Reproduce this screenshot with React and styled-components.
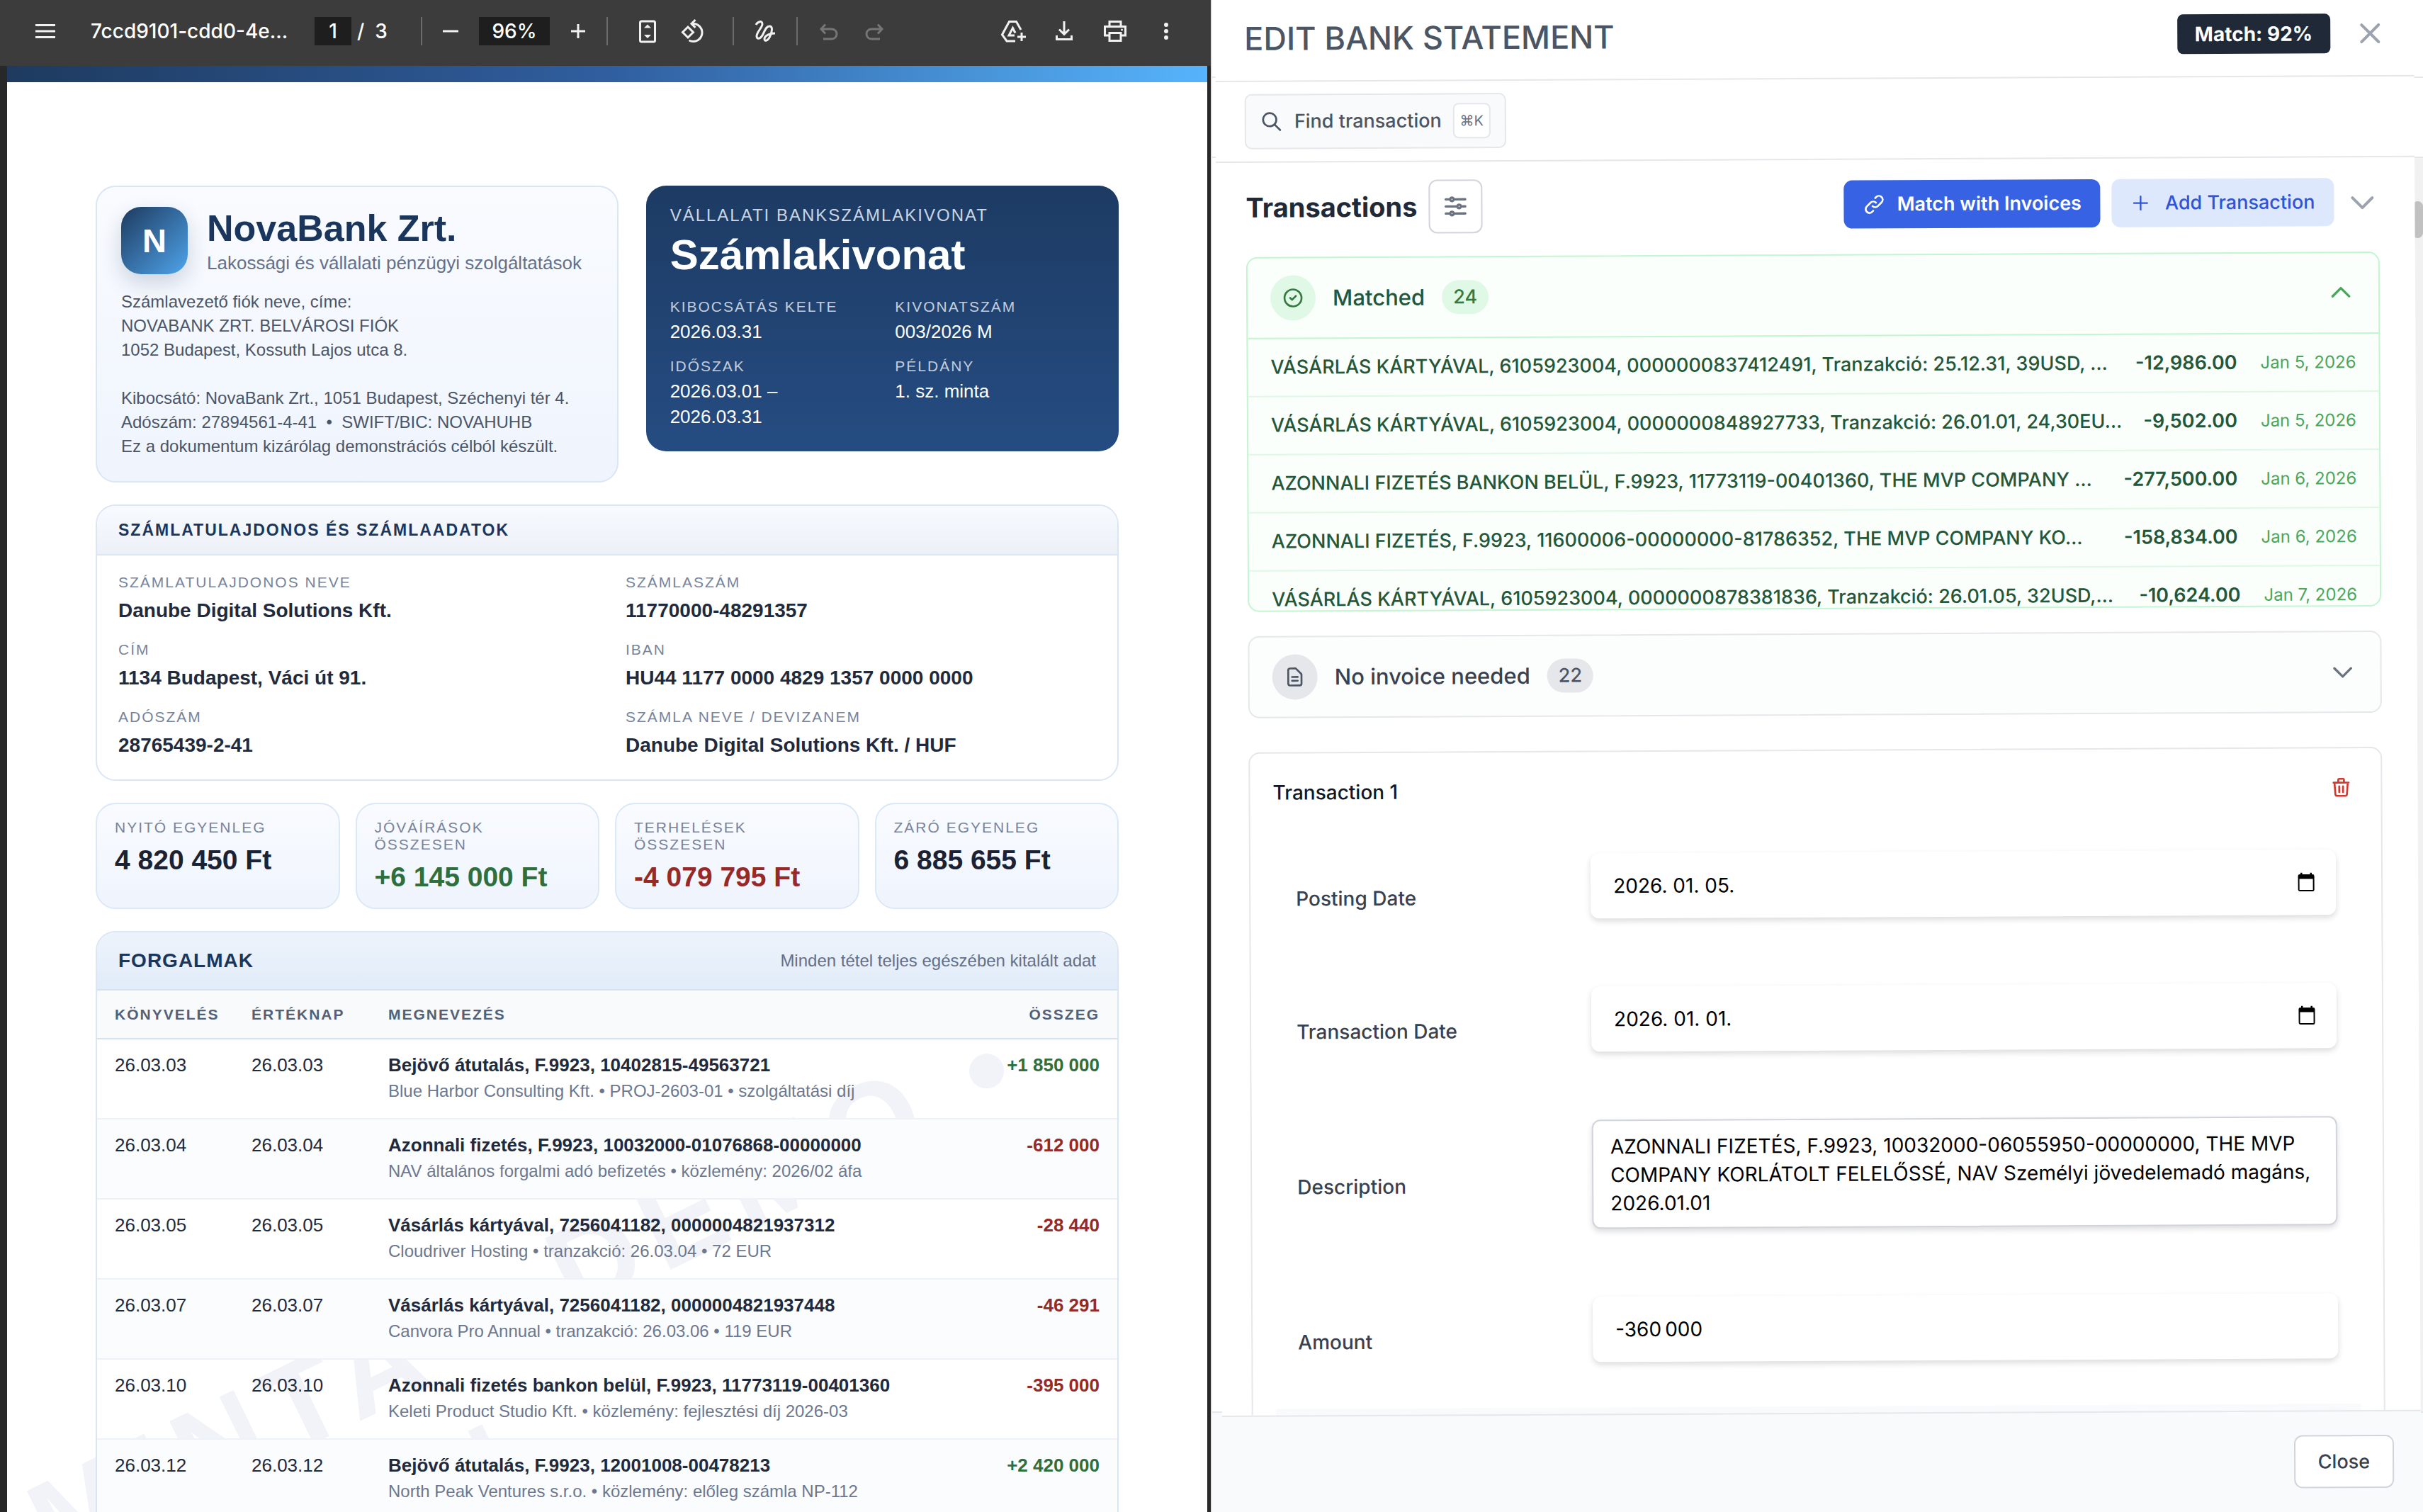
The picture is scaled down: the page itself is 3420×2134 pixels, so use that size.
import { useState } from "react";
import styled, { createGlobalStyle } from "styled-components";

const GlobalStyle = createGlobalStyle`
   *, *::before, *::after {
      box-sizing: border-box;
   }
   body {
      margin: 0;
      background: #ffffff;
   }
   button, input, textarea {
      font: inherit;
      color: inherit;
   }
   h1, h2, h3, p, dl, dd {
      margin: 0;
   }
`;

const Workspace = styled.main`
   display: grid;
   grid-template-columns: minmax(0, 1fr) minmax(0, 1fr);
   height: 100vh;
   overflow: hidden;
`;

/* ---------- document viewer ---------- */

const Viewer = styled.section`
   display: flex;
   flex-direction: column;
   min-width: 0;
   overflow: hidden;
   background: #282828;
   border-right: 1px solid #e5e5e5;
`;

const ViewerBar = styled.header`
   display: flex;
   align-items: center;
   justify-content: space-between;
   flex-shrink: 0;
   height: 93px;
   padding: 0 43px 5px 44px;
   background: #3c3c3c;
   color: #ffffff;
   font: 500 28px/40px Inter, sans-serif;
`;

const BarGroup = styled.div`
   display: flex;
   align-items: center;
   gap: ${({ $gap }) => $gap}px;
`;

const ZoomGroup = styled(BarGroup)`
   margin-right: 12px;
`;

const FileName = styled.span`
   width: 276px;
   margin: 0 16px 0 20px;
   white-space: nowrap;
`;

const BarButton = styled.button`
   display: block;
   width: 40px;
   height: 40px;
   padding: 0;
   border: 0;
   background: none;
   color: ${({ disabled }) => (disabled ? "#757575" : "#f1f1f1")};
   svg {
      display: block;
   }
`;

const BarInput = styled.input`
   width: ${({ $width }) => $width}px;
   height: 40px;
   padding: 0;
   border: 0;
   background: #1e1e1e;
   text-align: center;
`;

const PageCount = styled.span`
   width: 66px;
   margin-left: -16px;
   white-space: pre;
`;

const BarDivider = styled.span`
   width: 2px;
   height: 40px;
   margin-left: ${({ $spaced }) => ($spaced ? 12 : 0)}px;
   background: #6c6c6c;
`;

const Paper = styled.article`
   position: relative;
   flex: 1;
   min-height: 0;
   margin: 0 5px 0 10px;
   overflow: hidden;
   background: #ffffff;
   color: #1f2a3d;
   font: 26px/36px "Liberation Sans", Arial, sans-serif;
`;

const PaperStripe = styled.div`
   height: 23px;
   background: linear-gradient(90deg, #1e3a5f, #305e9f 50%, #56b4fc);
`;

const Watermark = styled.div`
   position: absolute;
   top: 1980px;
   left: 0;
   transform: rotate(-26deg);
   transform-origin: 0 0;
   color: #f1f3f8;
   font: bold 171px/197px "Liberation Sans", Arial, sans-serif;
   letter-spacing: 17px;
   white-space: nowrap;
   span {
      display: block;
      padding-left: 518px;
   }
`;

const PaperContent = styled.div`
   position: relative;
   display: flex;
   flex-direction: column;
   gap: 31px;
   padding: 146px 125px 0;
`;

const CardPair = styled.div`
   display: grid;
   grid-template-columns: 21fr 19fr;
   align-items: start;
   gap: 39px;
`;

const BankCard = styled.section`
   padding: 28px 34px 32px;
   border: 2px solid #dbe6f4;
   border-radius: 28px;
   background: linear-gradient(#f9fbff, #eff4fd);
`;

const BankHead = styled.div`
   display: flex;
   gap: 27px;
   margin-bottom: 22px;
`;

const BankLogo = styled.div`
   display: flex;
   align-items: center;
   justify-content: center;
   width: 94px;
   height: 95px;
   border-radius: 28px;
   background: linear-gradient(135deg, #1e3a5f, #4ea4ea);
   box-shadow: 0 12px 30px rgba(30, 58, 95, 0.2);
   color: #ffffff;
   font-size: 47px;
   font-weight: bold;
`;

const BankName = styled.h1`
   color: #1a365d;
   font-size: 52px;
   line-height: 60px;
`;

const BankTagline = styled.p`
   margin-top: 4px;
   color: #64708a;
   line-height: 30px;
`;

const BankAddress = styled.p`
   color: #4a5568;
   font-size: 24px;
   line-height: 34px;
   white-space: pre-line;
`;

const StatementCard = styled.section`
   padding: 27px 34px 31px;
   border-radius: 28px;
   background: linear-gradient(#1d3b63, #254c82);
   color: #ffffff;
`;

const StatementKind = styled.p`
   color: #ccd5e2;
   font-size: 24px;
   line-height: 30px;
   letter-spacing: 2px;
`;

const StatementTitle = styled.h2`
   margin: 8px 0 28px;
   font-size: 60px;
   line-height: 66px;
`;

const MetaGrid = styled.dl`
   display: grid;
   grid-template-columns: 1fr 1fr;
   gap: 19px 36px;
`;

const Caption = styled.dt`
   color: ${({ $light }) => ($light ? "#c3cddc" : "#77849b")};
   font-size: 21px;
   line-height: 24px;
   letter-spacing: 2px;
`;

const MetaValue = styled.dd`
   width: 200px;
   margin-top: 5px;
`;

const Panel = styled.section`
   overflow: hidden;
   border: 2px solid #dbe6f4;
   border-radius: 28px;
`;

const LedgerPanel = styled(Panel)`
   padding-bottom: 60px;
`;

const AccountTitle = styled.h2`
   padding: 16px 30px;
   border-bottom: 2px solid #dbe6f4;
   background: linear-gradient(#f7faff, #edf1f7);
   color: #1a365d;
   font-size: 23px;
   line-height: 36px;
   letter-spacing: 2px;
`;

const AccountGrid = styled.dl`
   display: grid;
   grid-template-columns: 1fr 1fr;
   gap: 25px 52px;
   padding: 26px 30px 30px;
`;

const AccountValue = styled.dd`
   margin-top: 10px;
   font-size: 28px;
   font-weight: bold;
`;

const Totals = styled.dl`
   display: grid;
   grid-template-columns: repeat(4, 1fr);
   gap: 22px;
`;

const TotalCard = styled.div`
   padding: 21px 25px;
   border: 2px solid #dbe8f7;
   border-radius: 28px;
   background: linear-gradient(#f9fbff, #eff4fd);
`;

const tones = { plus: "#2f6e3d", minus: "#962a28" };

const TotalValue = styled.dd`
   margin-top: 12px;
   color: ${({ $tone }) => tones[$tone] || "#1a2233"};
   font-size: 39px;
   font-weight: bold;
   line-height: 44px;
   white-space: nowrap;
`;

const LedgerHead = styled.div`
   display: flex;
   align-items: center;
   justify-content: space-between;
   height: 82px;
   padding: 0 30px;
   border-bottom: 2px solid #d3e3f3;
   background: linear-gradient(#edf3fb, #e1ecf9);
   color: #64708a;
   font-size: 24px;
`;

const LedgerTitle = styled.h2`
   color: #1a365d;
   font-size: 28px;
   letter-spacing: 1px;
`;

const Ledger = styled.table`
   width: 100%;
   border-collapse: collapse;
   table-layout: fixed;
   th {
      height: 68px;
      padding: 0 25px;
      border-bottom: 2px solid #d7e2f0;
      background: #f9fafc;
      color: #51617a;
      font-size: 21px;
      letter-spacing: 2px;
      text-align: left;
   }
   td {
      height: 113px;
      padding: 18px 25px 21px;
      border-bottom: 2px solid #edf1f8;
      vertical-align: top;
   }
   tbody tr:nth-child(even) {
      background: #fbfcfe;
   }
   th:nth-child(-n + 2) {
      width: 193px;
   }
   th:last-child {
      width: 230px;
      text-align: right;
   }
`;

const LedgerNote = styled.p`
   margin-top: 2px;
   color: #6b7890;
   font-size: 24px;
   line-height: 34px;
   white-space: nowrap;
`;

const LedgerAmount = styled.td`
   color: ${({ $tone }) => tones[$tone]};
   font-weight: bold;
   text-align: right;
   white-space: nowrap;
`;

/* ---------- edit drawer ---------- */

const Drawer = styled.aside`
   position: relative;
   min-width: 0;
   overflow: hidden;
   border-left: 1px solid #e5e5e5;
   background: linear-gradient(
      #ffffff 108px,
      #e5e7eb 108px 110px,
      #ffffff 110px 221px,
      #e5e7eb 221px 223px,
      #ffffff 223px calc(100% - 142px),
      #e5e7eb calc(100% - 142px) calc(100% - 140px),
      #f9fafb calc(100% - 140px)
   );
   color: #374151;
   font: 500 27px/40px Inter, sans-serif;
`;

const ScrollTrack = styled.div`
   position: absolute;
   top: 223px;
   right: 0;
   bottom: 142px;
   width: 15px;
   padding-top: 61px;
   background: #f1f1f1;
   &::before {
      content: "";
      display: block;
      height: 52px;
      border-radius: 8px;
      background: #c1c1c1;
   }
`;

/* the sheet hangs slightly askew on the drawer */
const Sheet = styled.div`
   position: relative;
   display: flex;
   flex-direction: column;
   width: calc(100% - 17px);
   height: calc(100% + 8px);
   margin-left: 4px;
   background: #ffffff;
   transform: rotate(-0.28deg);
   transform-origin: 0 0;
`;

const SheetHeader = styled.header`
   display: flex;
   align-items: center;
   height: 116px;
   padding: 0 38px 5px 41px;
   border-bottom: 2px solid #e5e7eb;
`;

const SheetTitle = styled.h1`
   flex: 1;
   color: #4b5563;
   font-size: 45px;
   font-weight: 500;
   line-height: 56px;
`;

const MatchBadge = styled.span`
   padding: 8px 25px;
   border-radius: 8px;
   background: #1f2937;
   color: #ffffff;
   font-size: 28px;
   font-weight: 700;
`;

const IconButton = styled.button`
   display: flex;
   padding: 0;
   border: 0;
   background: none;
   color: ${({ $color }) => $color};
`;

const CloseIconButton = styled(IconButton)`
   margin-left: 32px;
`;

const SearchBar = styled.div`
   height: 114px;
   padding: 17px 41px;
   border-bottom: 2px solid #e5e7eb;
`;

const SearchButton = styled.button`
   display: flex;
   align-items: center;
   gap: 16px;
   height: 78px;
   padding: 0 20px;
   border: 2px solid #e5e7eb;
   border-radius: 10px;
   background: #f9fafb;
   color: #4b5563;
`;

const Shortcut = styled.kbd`
   width: 53px;
   border: 2px solid #e5e7eb;
   border-radius: 8px;
   background: #ffffff;
   color: #6b7280;
   font: 20px/46px Inter, "DejaVu Sans", sans-serif;
   text-align: center;
`;

const SheetBody = styled.div`
   flex: 1;
   min-height: 0;
   padding: 25px 50px 0 42px;
   overflow: hidden;
`;

const SectionBar = styled.div`
   display: flex;
   align-items: center;
   gap: 16px;
   margin-bottom: 32px;
`;

const SectionTitle = styled.h2`
   color: #1f2937;
   font-size: 38px;
   font-weight: 700;
   line-height: 48px;
`;

const FilterButton = styled.button`
   display: flex;
   align-items: center;
   justify-content: center;
   width: 76px;
   height: 76px;
   margin-right: auto;
   border: 2px solid #d1d5db;
   border-radius: 12px;
   background: #ffffff;
   color: #6b7280;
`;

const ActionButton = styled.button`
   display: flex;
   align-items: center;
   gap: ${({ $primary }) => ($primary ? 16 : 20)}px;
   height: 68px;
   padding: 0 27px;
   border: 0;
   border-radius: 12px;
   background: ${({ $primary }) => ($primary ? "#3662e3" : "#dde8fc")};
   color: ${({ $primary }) => ($primary ? "#ffffff" : "#2f54d8")};
   font-weight: ${({ $primary }) => ($primary ? 600 : 500)};
`;

const palettes = {
   green: {
      border: "#c3f5d1",
      background: "#fafffb",
      chip: "#e0f9e7",
      text: "#24563a",
      chipText: "#35793f",
      icon: "#4aa65a",
   },
   gray: {
      border: "#e5e7eb",
      background: "#fcfdfd",
      chip: "#e5e7eb",
      text: "#374151",
      chipText: "#4b5563",
      icon: "#6b7280",
   },
};

const Group = styled.section`
   margin-bottom: 34px;
   overflow: hidden;
   border: 2px solid ${({ $palette }) => $palette.border};
   border-radius: 16px;
   background: ${({ $palette }) => $palette.background};
`;

const GroupHead = styled.button`
   display: flex;
   align-items: center;
   width: 100%;
   height: 112px;
   padding: 0 33px 0 32px;
   border: 0;
   background: none;
   color: ${({ $palette }) => $palette.text};
   > svg {
      margin-left: auto;
      color: ${({ $palette }) => $palette.icon};
   }
`;

const GroupIcon = styled.span`
   display: flex;
   align-items: center;
   justify-content: center;
   width: 64px;
   height: 64px;
   border-radius: 50%;
   background: ${({ $palette }) => $palette.chip};
   color: ${({ $palette }) => $palette.chipText};
`;

const GroupName = styled.span`
   margin: 0 24px;
   font-size: 31px;
`;

const GroupCount = styled.span`
   padding: 4px 16px;
   border-radius: 24px;
   background: ${({ $palette }) => $palette.chip};
   color: ${({ $palette }) => $palette.chipText};
`;

const MatchList = styled.ul`
   max-height: 385px;
   margin: 0;
   padding: 0;
   overflow: hidden;
   border-top: 2px solid #c3f5d1;
   list-style: none;
`;

const MatchRow = styled.li`
   display: flex;
   align-items: center;
   gap: 33px;
   height: 82px;
   padding: 0 32px;
   border-bottom: 2px solid #def8e5;
   color: #24563a;
   white-space: nowrap;
`;

const MatchName = styled.span`
   flex: 1;
   min-width: 0;
`;

const MatchAmount = styled.span`
   font-weight: 600;
`;

const MatchDate = styled.time`
   color: #4aa65a;
   font-size: 24px;
   font-weight: 400;
`;

const TransactionCard = styled.section`
   margin-top: 48px;
   padding: 0 32px;
   border: 2px solid #e5e7eb;
   border-radius: 16px;
`;

const TransactionHead = styled.div`
   display: flex;
   align-items: center;
   justify-content: space-between;
   padding: 35px 8px 20px 0;
   color: #111827;
`;

const TransactionTitle = styled.h3`
   font-size: 28px;
   font-weight: 500;
`;

const FieldRow = styled.div`
   display: grid;
   grid-template-columns: 416px 1fr;
   align-items: center;
   padding: 48px 32px;
`;

const FieldLabel = styled.label`
   padding-top: 32px;
   font-size: 28px;
`;

const FieldBox = styled.div`
   display: flex;
   align-items: center;
   height: 92px;
   padding: 0 30px 0 32px;
   border-radius: 12px;
   background: #ffffff;
   box-shadow: 0 4px 8px rgba(0, 0, 0, 0.14);
   color: #000000;
`;

const FieldInput = styled.input`
   flex: 1;
   min-width: 0;
   padding: 0;
   border: 0;
   background: none;
   font-size: 28px;
   font-weight: 400;
   outline: none;
`;

const FieldTextarea = styled.textarea`
   display: block;
   width: 100%;
   height: 154px;
   padding: 16px 24px;
   border: 2px solid #d1d5db;
   border-radius: 12px;
   background: #ffffff;
   box-shadow: 0 4px 8px rgba(0, 0, 0, 0.14);
   color: #000000;
   font-size: 28px;
   font-weight: 400;
   overflow: hidden;
   resize: none;
`;

const CardFooter = styled.div`
   height: 80px;
   margin-top: 16px;
   background: #f9fafb;
`;

const SheetFooter = styled.footer`
   display: flex;
   align-items: flex-start;
   justify-content: flex-end;
   height: 144px;
   padding: 33px 38px;
   border-top: 2px solid #e5e7eb;
   background: #f9fafb;
`;

const CloseButton = styled.button`
   height: 75px;
   padding: 0 32px;
   border: 2px solid #d1d5db;
   border-radius: 12px;
   background: #ffffff;
`;

/* ---------- icons ---------- */

const Icon = ({ d, size = 32, weight = 2 }) => (
   <svg
      width={size}
      height={size}
      viewBox="0 0 24 24"
      fill="none"
      stroke="currentColor"
      strokeWidth={weight}
      strokeLinecap="round"
      strokeLinejoin="round"
      aria-hidden="true"
   >
      <path d={d} />
   </svg>
);

const paths = {
   search: "M21 21l-6-6m2-5a7 7 0 11-14 0 7 7 0 0114 0z",
   close: "M6 18L18 6M6 6l12 12",
   plus: "M12 4v16m8-8H4",
   down: "M19 9l-7 7-7-7",
   up: "M5 15l7-7 7 7",
   check: "M9 12l2 2 4-4m6 2a9 9 0 11-18 0 9 9 0 0118 0z",
   document:
      "M9 12h6m-6 4h6m2 5H7a2 2 0 01-2-2V5a2 2 0 012-2h5.586a1 1 0 01.707.293l5.414 5.414a1 1 0 01.293.707V19a2 2 0 01-2 2z",
   link: "M13.828 10.172a4 4 0 00-5.656 0l-4 4a4 4 0 105.656 5.656l1.102-1.101m-.758-4.899a4 4 0 005.656 0l4-4a4 4 0 00-5.656-5.656l-1.1 1.1",
   trash: "M19 7l-.867 12.142A2 2 0 0116.138 21H7.862a2 2 0 01-1.995-1.858L5 7m5 4v6m4-6v6m1-10V4a1 1 0 00-1-1h-4a1 1 0 00-1 1v3M4 7h16",
   sliders:
      "M10.5 6h9.75M10.5 6a1.5 1.5 0 11-3 0m3 0a1.5 1.5 0 10-3 0M3.75 6H7.5m3 12h9.75m-9.75 0a1.5 1.5 0 01-3 0m3 0a1.5 1.5 0 00-3 0m-3.75 0H7.5m9-6h3.75m-3.75 0a1.5 1.5 0 01-3 0m3 0a1.5 1.5 0 00-3 0m-9.75 0h9.75",
};

const barIcons = {
   menu: <path d="M6 11.5h28M6 20h28M6 28.5h28" />,
   minus: <path d="M9 20h22" />,
   plus: <path d="M10 20h20M20 10v20" />,
   fit: (
      <>
         <rect x="9.5" y="6" width="21" height="29" rx="2" />
         <path d="M20 10.5l5 5H15zM20 30l5-5H15z" fill="currentColor" stroke="none" />
      </>
   ),
   rotate: (
      <>
         <path d="M13 14l7.5 7.5-7.5 7.5-7.5-7.5z" />
         <path d="M18 9.5h2.5a12.5 12.5 0 010 25c-2 0-4-.5-6-1.5M23.5 4L18 9.5l5.500 5.5" />
      </>
   ),
   draw: (
      <path d="M7 11c2-4 9-7 9-1 0 5-8 11-8 17 0 5 5 4 8-1 4-7 5-13 10-13s4 7 1 14-8 8-8 4 6-8 15-8" />
   ),
   undo: <path d="M15 10.5L9 17l6 6.5M9 17h15a7 7 0 010 14H12" />,
   redo: <path d="M25 10.5l6 6.5-6 6.5M31 17H16a7 7 0 000 14h12" />,
   drive: (
      <path d="M23 34H11L4.5 25 14.5 6.5h10L31 18M22 26h-8l5.5-10.5 3.5 7M32 22v12M26 28h12" />
   ),
   download: <path d="M20 6v18M13 17.5l7 7 7-7M9.5 26v5.5h21V26" />,
   print: (
      <>
         <path d="M12 13V6.5h16V13M12 26H5.5V13.5h29V26H28" />
         <path d="M12 22.5h16v11H12z" />
         <circle cx="29.5" cy="18" r="1.5" fill="currentColor" stroke="none" />
      </>
   ),
   more: (
      <g fill="currentColor" stroke="none">
         <circle cx="20" cy="11" r="3" />
         <circle cx="20" cy="20" r="3" />
         <circle cx="20" cy="29" r="3" />
      </g>
   ),
};

const BarAction = ({ name, label, disabled }) => (
   <BarButton type="button" aria-label={label} disabled={disabled}>
      <svg
         width="40"
         height="40"
         viewBox="0 0 40 40"
         fill="none"
         stroke="currentColor"
         strokeWidth="3"
         aria-hidden="true"
      >
         {barIcons[name]}
      </svg>
   </BarButton>
);

const CalendarIcon = () => (
   <svg width="24" height="28" viewBox="0 0 24 28" aria-hidden="true">
      <path
         d="M4 0h2.5v2.5h11V0H20v2.5h1A2.5 2.5 0 0123.5 5v19a2.5 2.5 0 01-2.5 2.5H3A2.5 2.5 0 01.5 24V5A2.5 2.5 0 013 2.5h1zM2.5 9v15.5h19V9z"
         fill="#000000"
         fillRule="evenodd"
      />
   </svg>
);

/* ---------- data ---------- */

const accountFields = [
   ["SZÁMLATULAJDONOS NEVE", "Danube Digital Solutions Kft."],
   ["SZÁMLASZÁM", "11770000-48291357"],
   ["CÍM", "1134 Budapest, Váci út 91."],
   ["IBAN", "HU44 1177 0000 4829 1357 0000 0000"],
   ["ADÓSZÁM", "28765439-2-41"],
   ["SZÁMLA NEVE / DEVIZANEM", "Danube Digital Solutions Kft. / HUF"],
];

const statementMeta = [
   ["KIBOCSÁTÁS KELTE", "2026.03.31"],
   ["KIVONATSZÁM", "003/2026 M"],
   ["IDŐSZAK", "2026.03.01 – 2026.03.31"],
   ["PÉLDÁNY", "1. sz. minta"],
];

const totals = [
   { label: "NYITÓ EGYENLEG", value: "4 820 450 Ft" },
   { label: "JÓVÁÍRÁSOK ÖSSZESEN", value: "+6 145 000 Ft", tone: "plus" },
   { label: "TERHELÉSEK ÖSSZESEN", value: "-4 079 795 Ft", tone: "minus" },
   { label: "ZÁRÓ EGYENLEG", value: "6 885 655 Ft" },
];

const ledger = [
   {
      date: "26.03.03",
      title: "Bejövő átutalás, F.9923, 10402815-49563721",
      note: "Blue Harbor Consulting Kft. • PROJ-2603-01 • szolgáltatási díj",
      amount: "+1 850 000",
   },
   {
      date: "26.03.04",
      title: "Azonnali fizetés, F.9923, 10032000-01076868-00000000",
      note: "NAV általános forgalmi adó befizetés • közlemény: 2026/02 áfa",
      amount: "-612 000",
   },
   {
      date: "26.03.05",
      title: "Vásárlás kártyával, 7256041182, 0000004821937312",
      note: "Cloudriver Hosting • tranzakció: 26.03.04 • 72 EUR",
      amount: "-28 440",
   },
   {
      date: "26.03.07",
      title: "Vásárlás kártyával, 7256041182, 0000004821937448",
      note: "Canvora Pro Annual • tranzakció: 26.03.06 • 119 EUR",
      amount: "-46 291",
   },
   {
      date: "26.03.10",
      title: "Azonnali fizetés bankon belül, F.9923, 11773119-00401360",
      note: "Keleti Product Studio Kft. • közlemény: fejlesztési díj 2026-03",
      amount: "-395 000",
   },
   {
      date: "26.03.12",
      title: "Bejövő átutalás, F.9923, 12001008-00478213",
      note: "North Peak Ventures s.r.o. • közlemény: előleg számla NP-112",
      amount: "+2 420 000",
   },
];

const matches = [
   {
      name: "VÁSÁRLÁS KÁRTYÁVAL, 6105923004, 0000000837412491, Tranzakció: 25.12.31, 39USD, …",
      amount: "-12,986.00",
      date: "Jan 5, 2026",
   },
   {
      name: "VÁSÁRLÁS KÁRTYÁVAL, 6105923004, 0000000848927733, Tranzakció: 26.01.01, 24,30EU…",
      amount: "-9,502.00",
      date: "Jan 5, 2026",
   },
   {
      name: "AZONNALI FIZETÉS BANKON BELÜL, F.9923, 11773119-00401360, THE MVP COMPANY …",
      amount: "-277,500.00",
      date: "Jan 6, 2026",
   },
   {
      name: "AZONNALI FIZETÉS, F.9923, 11600006-00000000-81786352, THE MVP COMPANY KO…",
      amount: "-158,834.00",
      date: "Jan 6, 2026",
   },
   {
      name: "VÁSÁRLÁS KÁRTYÁVAL, 6105923004, 0000000878381836, Tranzakció: 26.01.05, 32USD,…",
      amount: "-10,624.00",
      date: "Jan 7, 2026",
   },
];

const address = `Számlavezető fiók neve, címe:
NOVABANK ZRT. BELVÁROSI FIÓK
1052 Budapest, Kossuth Lajos utca 8.

Kibocsátó: NovaBank Zrt., 1051 Budapest, Széchenyi tér 4.
Adószám: 27894561-4-41 \u00a0•\u00a0 SWIFT/BIC: NOVAHUHB
Ez a dokumentum kizárólag demonstrációs célból készült.`;

const toneOf = (amount) => (amount.startsWith("+") ? "plus" : "minus");

/* ---------- views ---------- */

const ViewerToolbar = () => (
   <ViewerBar>
      <BarGroup $gap={24}>
         <BarAction name="menu" label="Menu" />
         <FileName>7ccd9101-cdd0-4e…</FileName>
         <BarInput $width={52} aria-label="Page number" defaultValue="1" />
         <PageCount>/  3</PageCount>
         <ZoomGroup $gap={20}>
            <BarDivider />
            <BarAction name="minus" label="Zoom out" />
            <BarInput $width={100} aria-label="Zoom level" defaultValue="96%" />
            <BarAction name="plus" label="Zoom in" />
            <BarDivider />
         </ZoomGroup>
         <BarAction name="fit" label="Fit to page" />
         <BarAction name="rotate" label="Rotate" />
         <BarDivider $spaced />
         <BarAction name="draw" label="Draw" />
         <BarDivider />
         <BarAction name="undo" label="Undo" disabled />
         <BarAction name="redo" label="Redo" disabled />
      </BarGroup>
      <BarGroup $gap={32}>
         <BarAction name="drive" label="Save to Drive" />
         <BarAction name="download" label="Download" />
         <BarAction name="print" label="Print" />
         <BarAction name="more" label="More actions" />
      </BarGroup>
   </ViewerBar>
);

const StatementPaper = () => (
   <Paper lang="hu">
      <PaperStripe />
      <Watermark aria-hidden="true">
         MINTA • DEMO •<span>N</span>
      </Watermark>
      <PaperContent>
         <CardPair>
            <BankCard>
               <BankHead>
                  <BankLogo>N</BankLogo>
                  <div>
                     <BankName>NovaBank Zrt.</BankName>
                     <BankTagline>Lakossági és vállalati pénzügyi szolgáltatások</BankTagline>
                  </div>
               </BankHead>
               <BankAddress>{address}</BankAddress>
            </BankCard>
            <StatementCard>
               <StatementKind>VÁLLALATI BANKSZÁMLAKIVONAT</StatementKind>
               <StatementTitle>Számlakivonat</StatementTitle>
               <MetaGrid>
                  {statementMeta.map(([label, value]) => (
                     <div key={label}>
                        <Caption $light>{label}</Caption>
                        <MetaValue>{value}</MetaValue>
                     </div>
                  ))}
               </MetaGrid>
            </StatementCard>
         </CardPair>

         <Panel>
            <AccountTitle>SZÁMLATULAJDONOS ÉS SZÁMLAADATOK</AccountTitle>
            <AccountGrid>
               {accountFields.map(([label, value]) => (
                  <div key={label}>
                     <Caption>{label}</Caption>
                     <AccountValue>{value}</AccountValue>
                  </div>
               ))}
            </AccountGrid>
         </Panel>

         <Totals>
            {totals.map(({ label, value, tone }) => (
               <TotalCard key={label}>
                  <Caption>{label}</Caption>
                  <TotalValue $tone={tone}>{value}</TotalValue>
               </TotalCard>
            ))}
         </Totals>

         <LedgerPanel>
            <LedgerHead>
               <LedgerTitle>FORGALMAK</LedgerTitle>
               <span>Minden tétel teljes egészében kitalált adat</span>
            </LedgerHead>
            <Ledger>
               <thead>
                  <tr>
                     <th>KÖNYVELÉS</th>
                     <th>ÉRTÉKNAP</th>
                     <th>MEGNEVEZÉS</th>
                     <th>ÖSSZEG</th>
                  </tr>
               </thead>
               <tbody>
                  {ledger.map(({ date, title, note, amount }) => (
                     <tr key={date}>
                        <td>{date}</td>
                        <td>{date}</td>
                        <td>
                           <strong>{title}</strong>
                           <LedgerNote>{note}</LedgerNote>
                        </td>
                        <LedgerAmount $tone={toneOf(amount)}>{amount}</LedgerAmount>
                     </tr>
                  ))}
               </tbody>
            </Ledger>
         </LedgerPanel>
      </PaperContent>
   </Paper>
);

const TransactionGroup = ({ tone, icon, name, count, open, children }) => {
   const palette = palettes[tone];
   return (
      <Group $palette={palette}>
         <GroupHead type="button" aria-expanded={open} $palette={palette}>
            <GroupIcon $palette={palette}>
               <Icon d={paths[icon]} />
            </GroupIcon>
            <GroupName>{name}</GroupName>
            <GroupCount $palette={palette}>{count}</GroupCount>
            <Icon d={open ? paths.up : paths.down} size={40} />
         </GroupHead>
         {children}
      </Group>
   );
};

const TransactionForm = () => {
   const [values, setValues] = useState({
      postingDate: "2026. 01. 05.",
      transactionDate: "2026. 01. 01.",
      description:
         "AZONNALI FIZETÉS, F.9923, 10032000-06055950-00000000, THE MVP COMPANY KORLÁTOLT FELELŐSSÉ, NAV Személyi jövedelemadó magáns, 2026.01.01",
      amount: "-360\u202f000",
   });

   const handleChange = (e) => {
      const { name, value } = e.target;
      setValues((prev) => ({ ...prev, [name]: value }));
   };

   const renderInput = (name, label, withCalendar) => (
      <FieldRow>
         <FieldLabel htmlFor={name}>{label}</FieldLabel>
         <FieldBox>
            <FieldInput id={name} name={name} value={values[name]} onChange={handleChange} />
            {withCalendar && (
               <IconButton type="button" $color="#000000" aria-label={`Pick ${label}`}>
                  <CalendarIcon />
               </IconButton>
            )}
         </FieldBox>
      </FieldRow>
   );

   return (
      <TransactionCard>
         <TransactionHead>
            <TransactionTitle>Transaction 1</TransactionTitle>
            <IconButton type="button" $color="#d3382f" aria-label="Delete transaction">
               <Icon d={paths.trash} />
            </IconButton>
         </TransactionHead>
         {renderInput("postingDate", "Posting Date", true)}
         {renderInput("transactionDate", "Transaction Date", true)}
         <FieldRow>
            <FieldLabel htmlFor="description">Description</FieldLabel>
            <FieldTextarea
               id="description"
               name="description"
               spellCheck={false}
               value={values.description}
               onChange={handleChange}
            />
         </FieldRow>
         {renderInput("amount", "Amount", false)}
         <CardFooter />
      </TransactionCard>
   );
};

const EditDrawer = () => (
   <Drawer>
      <ScrollTrack />
      <Sheet>
         <SheetHeader>
            <SheetTitle>EDIT BANK STATEMENT</SheetTitle>
            <MatchBadge>Match: 92%</MatchBadge>
            <CloseIconButton type="button" $color="#9ca3af" aria-label="Close panel">
               <Icon d={paths.close} size={48} />
            </CloseIconButton>
         </SheetHeader>
         <SearchBar>
            <SearchButton type="button">
               <Icon d={paths.search} />
               Find transaction
               <Shortcut>⌘K</Shortcut>
            </SearchButton>
         </SearchBar>
         <SheetBody>
            <SectionBar>
               <SectionTitle>Transactions</SectionTitle>
               <FilterButton type="button" aria-label="Filter transactions">
                  <Icon d={paths.sliders} size={40} />
               </FilterButton>
               <ActionButton type="button" $primary>
                  <Icon d={paths.link} />
                  Match with Invoices
               </ActionButton>
               <ActionButton type="button">
                  <Icon d={paths.plus} size={28} />
                  Add Transaction
               </ActionButton>
               <IconButton type="button" $color="#9ca3af" aria-label="Collapse transactions">
                  <Icon d={paths.down} size={48} />
               </IconButton>
            </SectionBar>

            <TransactionGroup tone="green" icon="check" name="Matched" count={24} open>
               <MatchList>
                  {matches.map(({ name, amount, date }) => (
                     <MatchRow key={name}>
                        <MatchName>{name}</MatchName>
                        <MatchAmount>{amount}</MatchAmount>
                        <MatchDate>{date}</MatchDate>
                     </MatchRow>
                  ))}
               </MatchList>
            </TransactionGroup>
            <TransactionGroup
               tone="gray"
               icon="document"
               name="No invoice needed"
               count={22}
               open={false}
            />
            <TransactionForm />
         </SheetBody>
         <SheetFooter>
            <CloseButton type="button">Close</CloseButton>
         </SheetFooter>
      </Sheet>
   </Drawer>
);

const App = () => (
   <>
      <GlobalStyle />
      <Workspace>
         <Viewer>
            <ViewerToolbar />
            <StatementPaper />
         </Viewer>
         <EditDrawer />
      </Workspace>
   </>
);

export default App;
